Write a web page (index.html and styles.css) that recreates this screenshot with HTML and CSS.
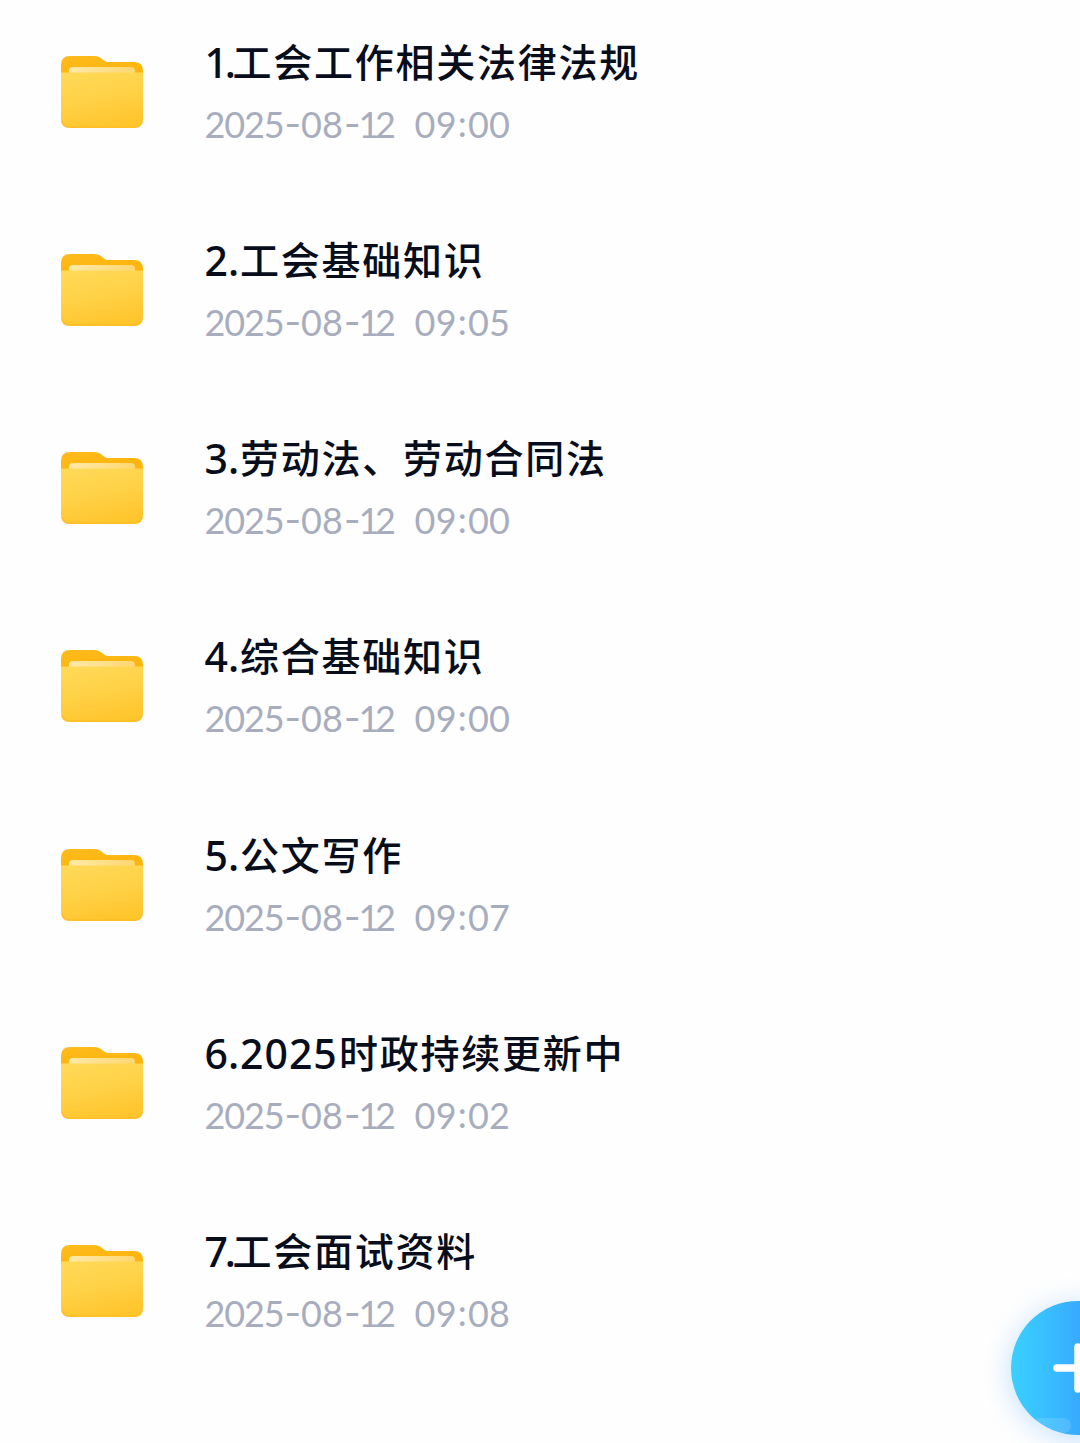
FILE: index.html
```html
<!DOCTYPE html>
<html lang="zh-CN">
<head>
<meta charset="utf-8">
<title>文件列表</title>
<link rel="stylesheet" href="styles.css">
</head>
<body>
<svg class="defs" width="0" height="0" aria-hidden="true">
  <defs>
    <linearGradient id="back" x1="0" y1="0" x2="0.3" y2="1"><stop offset="0" stop-color="#fdbb1d"/><stop offset="1" stop-color="#ffb000"/></linearGradient>
    <linearGradient id="front" x1="0.2" y1="0" x2="0.5" y2="1"><stop offset="0" stop-color="#ffd957"/><stop offset="0.55" stop-color="#ffd044"/><stop offset="1" stop-color="#ffc52d"/></linearGradient>
    <linearGradient id="sheet" x1="0" y1="0" x2="1" y2="0"><stop offset="0" stop-color="#ffe9a8"/><stop offset="0.5" stop-color="#ffe08c"/><stop offset="1" stop-color="#ffd670"/></linearGradient>
    <symbol id="folder" viewBox="0 0 84 74">
      <path fill="url(#back)" d="M1 10Q1 1 10 1H34Q39 1 42 4L44 5.500Q46 7 49 7H74Q83 7 83 16V40H1Z"/>
      <path fill="url(#sheet)" d="M9 19V16Q9 12 13 12H71Q75 12 75 16V19Z"/>
      <path fill="url(#front)" d="M1 17.500H83V64Q83 73 74 73H10Q1 73 1 64Z"/>
      <path fill="none" stroke="#ffbe26" stroke-width="1.500" d="M2 66Q3 72 10 72H74Q81 72 82 66"/>
    </symbol>
  </defs>
</svg>
<ul class="files">
  <li class="file"><svg class="icon"><use href="#folder"/></svg><div class="info"><h2 class="name"><span class="index narrow">1.</span>工会工作相关法律法规</h2><p class="date"><span class="year">2025</span><span class="dash">-</span><span class="month">08</span><span class="dash">-</span><span class="day">12</span><span class="time">09<span class="colon">:</span>00</span></p></div></li>
  <li class="file"><svg class="icon"><use href="#folder"/></svg><div class="info"><h2 class="name"><span class="index">2.</span>工会基础知识</h2><p class="date"><span class="year">2025</span><span class="dash">-</span><span class="month">08</span><span class="dash">-</span><span class="day">12</span><span class="time">09<span class="colon">:</span>05</span></p></div></li>
  <li class="file"><svg class="icon"><use href="#folder"/></svg><div class="info"><h2 class="name"><span class="index">3.</span>劳动法、劳动合同法</h2><p class="date"><span class="year">2025</span><span class="dash">-</span><span class="month">08</span><span class="dash">-</span><span class="day">12</span><span class="time">09<span class="colon">:</span>00</span></p></div></li>
  <li class="file"><svg class="icon"><use href="#folder"/></svg><div class="info"><h2 class="name"><span class="index">4.</span>综合基础知识</h2><p class="date"><span class="year">2025</span><span class="dash">-</span><span class="month">08</span><span class="dash">-</span><span class="day">12</span><span class="time">09<span class="colon">:</span>00</span></p></div></li>
  <li class="file"><svg class="icon"><use href="#folder"/></svg><div class="info"><h2 class="name"><span class="index">5.</span>公文写作</h2><p class="date"><span class="year">2025</span><span class="dash">-</span><span class="month">08</span><span class="dash">-</span><span class="day">12</span><span class="time">09<span class="colon">:</span>07</span></p></div></li>
  <li class="file"><svg class="icon"><use href="#folder"/></svg><div class="info"><h2 class="name"><span class="index">6.</span><span class="number">2025</span>时政持续更新中</h2><p class="date"><span class="year">2025</span><span class="dash">-</span><span class="month">08</span><span class="dash">-</span><span class="day">12</span><span class="time">09<span class="colon">:</span>02</span></p></div></li>
  <li class="file"><svg class="icon"><use href="#folder"/></svg><div class="info"><h2 class="name"><span class="index narrow">7.</span>工会面试资料</h2><p class="date"><span class="year">2025</span><span class="dash">-</span><span class="month">08</span><span class="dash">-</span><span class="day">12</span><span class="time">09<span class="colon">:</span>08</span></p></div></li>
</ul>
<div class="corner">
  <button class="add" aria-label="添加"><svg width="134" height="134" viewBox="0 0 134 134"><path d="M46 67H88M67 46V88" stroke="#fff" stroke-width="7.500" stroke-linecap="round"/><rect x="22" y="117" width="38" height="15" rx="7" fill="#fff" opacity=".12"/></svg></button>
</div>
</body>
</html>
```
FILE: styles.css
```css
* { box-sizing: border-box; }
body {
  margin: 0;
  height: 1443px;
  overflow: hidden;
  position: relative;
  background: #fefefe;
  font-family: Lato, "Noto Sans CJK SC", sans-serif;
}
.defs { display: block; }
.files { margin: 0; padding: 28px 0 0 60px; list-style: none; }
.file { display: flex; gap: 60.5px; height: 198.15px; }
.icon { width: 84px; height: 74px; margin-top: 27px; flex: none; }
.info { white-space: nowrap; }
.name {
  margin: 0;
  height: 69px;
  display: flex;
  line-height: 65px;
  font-family: "Noto Sans CJK SC", sans-serif;
  font-size: 39px;
  font-weight: 500;
  letter-spacing: 1.75px;
  color: #080d1c;
}
.index, .number {
  flex: none;
  line-height: 68px;
  font-family: "Noto Sans", sans-serif;
  font-size: 41px;
  font-weight: 500;
  letter-spacing: 0;
}
.index { width: 35.5px; }
.index.narrow { width: 28px; letter-spacing: -3.2px; }
.number { width: 99px; letter-spacing: 1px; }
.date {
  margin: 0;
  display: flex;
  height: 54px;
  line-height: 54px;
  font-family: Lato, sans-serif;
  font-size: 36px;
  color: #a8adbe;
}
.date span { flex: none; }
.year { width: 80px; letter-spacing: -1.1px; }
.dash { width: 16.5px; font-family: Inter, sans-serif; line-height: 54px; text-align: center; }
.month { width: 43px; }
.day { width: 54px; letter-spacing: -4.5px; text-indent: -2px; }
.time { display: flex; letter-spacing: .3px; }
.colon { width: 11px; text-align: center; line-height: 52px; }
.corner {
  position: absolute;
  right: 0;
  bottom: 0;
  width: 120px;
  height: 190px;
  padding: 48px 0 0 51px;
  overflow: hidden;
}
.add {
  display: block;
  width: 134px;
  height: 134px;
  padding: 0;
  border: 0;
  border-radius: 50%;
  background: linear-gradient(90deg, #3bcfff 0%, #38c2ff 22%, #38a9ff 52%, #318cff 100%);
  box-shadow: 0 4px 28px rgba(65, 155, 255, .32);
}
.add svg { display: block; }
```
